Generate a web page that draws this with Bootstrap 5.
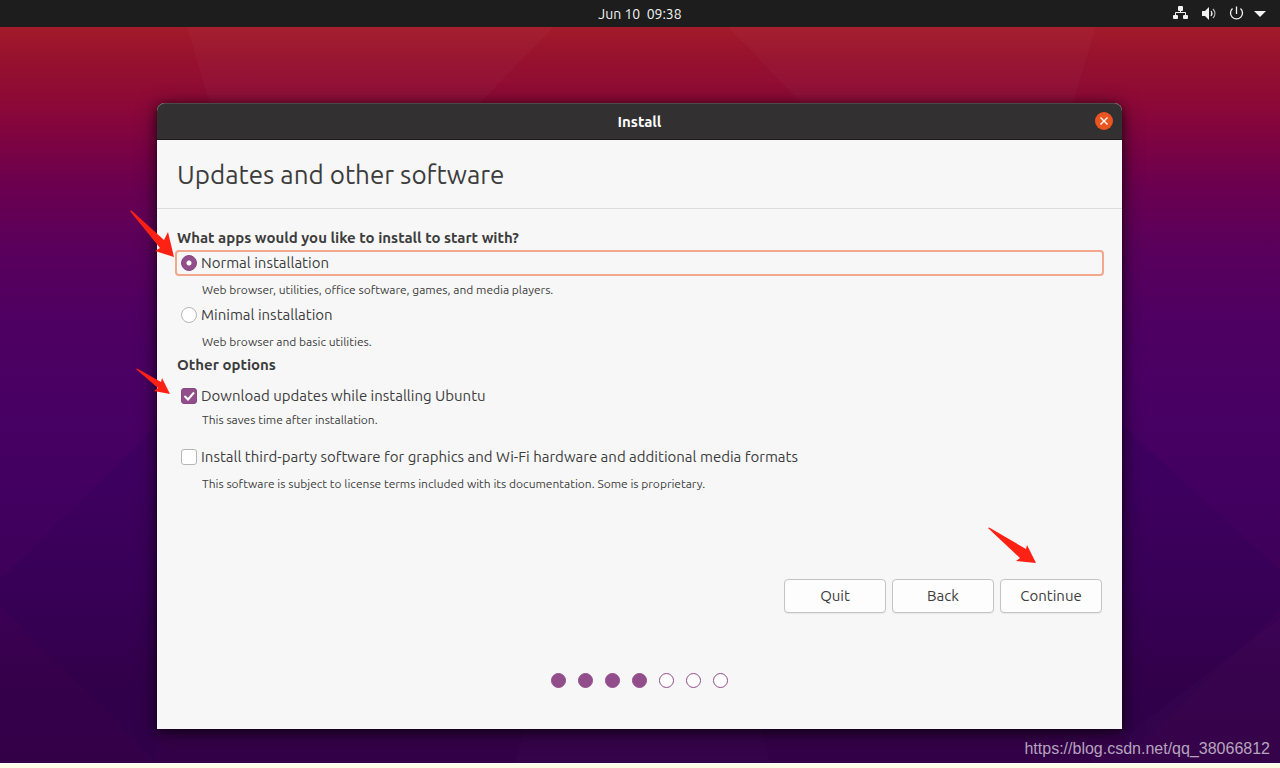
<!DOCTYPE html>
<html lang="en">
<head>
<meta charset="utf-8">
<meta name="viewport" content="width=device-width, initial-scale=1">
<title>Install</title>
<link href="https://cdn.jsdelivr.net/npm/bootstrap@5.3.0/dist/css/bootstrap.min.css" rel="stylesheet">
<style>
  body { font-family: Ubuntu, "Noto Sans", sans-serif; font-size: 15px; line-height: 20px; color: #3d3d3d; background: #ffffe6; }
  .topbar { height: 27px; background: #1d1d1d; color: #f2f2f2; }
  .topbar-side { flex: 1 1 0; }
  .clock { font-size: 14px; white-space: pre; }
  .desktop { padding: 76px 17px 34px 16px; margin-bottom: 4px; border-bottom: 1px solid #fff; overflow: hidden;
    background: linear-gradient(#a31a2a 0, #97122d 4%, #8b0838 11%, #7b0343 16%, #6a0050 22%, #5a005c 30%, #4e0062 40%, #480063 52%, #420060 63%, #3d0058 76%, #36004b 88%, #330047 100%); }
  .wallpaper { inset: 0; }
  .installer { max-width: 965px; margin-right: auto; margin-left: auto; background: #f7f7f7; border-radius: 8px 8px 0 0; box-shadow: 0 2px 8px rgba(0,0,0,.5), 0 3px 20px rgba(0,0,0,.5); }
  .titlebar { height: 37px; background: #323030; border-top: 1px solid #4b4a49; border-bottom: 1px solid #1c1b1b; border-radius: 8px 8px 0 0; color: #fff; }
  .title-close { width: 18px; height: 18px; background: #e95420; right: 9px; top: 8px; }
  .page-head { height: 69px; border-bottom: 1px solid #dcdcdc; padding: 2px 20px 0; }
  .page-title { font-size: 26px; line-height: 32px; }
  .page-body { padding: 19px 18px 41px; }
  .group-title { font-size: 15px; line-height: 20px; padding-left: 2px; margin-bottom: 2px; }
  .group-title.other { margin: 3px 0 8px; }
  .option { height: 26px; border: 2px solid transparent; border-radius: 4px; padding: 0 4px; gap: 4px; }
  .option.focused { border-color: #f3a78d; }
  .option .form-check-input { width: 16px; height: 16px; margin: 0; flex: none; background-color: #fff; border-color: #b8b6b5; }
  .option .form-check-input[type=checkbox] { border-radius: 3px; }
  .option .form-check-input:checked { background-color: #924d8b; border-color: #8a4783; }
  .option .form-check-input[type=radio]:checked { background-image: radial-gradient(circle, #fff 0 2px, transparent 3px); }
  .option .form-check-input[type=checkbox]:checked { background-image: url("data:image/svg+xml,%3Csvg xmlns='http://www.w3.org/2000/svg' viewBox='0 0 14 14'%3E%3Cpath d='M2.500 7l3.500 3.500 6-7' fill='none' stroke='%23fff' stroke-width='2'/%3E%3C/svg%3E"); }
  .hint { font-size: 12px; padding-left: 27px; margin: 4px 0 2px; }
  .hint.tight { margin: 1px 0 14px; }
  .btn-installer { width: 102px; height: 34px; padding: 0; font-size: 15px; color: #3d3d3d; background: #fdfdfd; border: 1px solid #c4c4c4; border-radius: 4px; box-shadow: 0 1px 1px rgba(0,0,0,.06); }
  .actions { gap: 6px; margin-top: 85px; padding-right: 2px; }
  .steps { gap: 12px; margin-top: 60px; }
  .step-dot { width: 15px; height: 15px; border: 1px solid #924d8b; background: #fff; border-radius: 50%; }
  .step-dot.done { background: #924d8b; }
  .pointer { fill: #ff2114; pointer-events: none; }
  .pointer-a { left: -28px; top: 107px; }
  .pointer-b { left: -22px; top: 265px; }
  .pointer-c { right: 86px; top: 424px; }
  .credit { right: 10px; bottom: 4px; font: 16px/20px "Liberation Sans", Arial, sans-serif; color: #b5a4bd; text-decoration: none; }
</style>
</head>
<body class="d-flex flex-column min-vh-100">
<header class="topbar d-flex align-items-center">
  <div class="topbar-side ps-3"></div>
  <time class="clock">Jun 10  09:38</time>
  <div class="topbar-side d-flex justify-content-end pe-3">
    <svg width="92" height="18" viewBox="0 0 92 18" fill="#f2f2f2" overflow="visible" aria-hidden="true">
      <rect x="6" y="1" width="5" height="5" rx="1"/><rect x="1" y="10" width="5" height="4" rx="1"/><rect x="11" y="10" width="5" height="4" rx="1"/>
      <path d="M8.500 5v3M3.500 11V7.500h10V11" fill="none" stroke="#f2f2f2"/>
      <path d="M30 6h3l4-4v13l-4-4h-3z"/>
      <path d="M39 6q2 2.500 0 5" fill="none" stroke="#f2f2f2" stroke-width="1.200"/>
      <path d="M41 4q4 4.500 0 9" fill="none" stroke="#bbb" stroke-width="1.200"/>
      <path d="M60.500 3.500a6 6 0 1 0 8 0M64.500 1.500V9" fill="none" stroke="#f2f2f2" stroke-width="1.300"/>
      <path d="M82 6h12l-6 6z"/>
    </svg>
  </div>
</header>
<main class="desktop position-relative flex-grow-1">
  <svg class="wallpaper position-absolute w-100 h-100" viewBox="0 27 1280 736" preserveAspectRatio="none" aria-hidden="true">
    <g fill="#fff" fill-opacity=".025">
      <path d="M187 27H554L390 195H237z"/><path d="M728 27H1096L1045 195H890z"/>
    </g>
    <g fill="#1c0050" fill-opacity=".12">
      <path d="M0 580L157 425V763L0 605z"/><path d="M1280 570L1122 425V763L1280 610z"/>
    </g>
    <g fill="#fff" fill-opacity=".01"><path d="M515 763l15-60h225l15 60z"/><path d="M1090 763l190-145v145z"/></g>
  </svg>
  <section class="installer position-relative" aria-labelledby="window-title">
    <div class="titlebar d-flex align-items-center justify-content-center position-relative">
      <strong id="window-title">Install</strong>
      <button type="button" class="title-close position-absolute border-0 rounded-circle p-0 d-flex align-items-center justify-content-center" aria-label="Close">
        <svg width="10" height="10" viewBox="0 0 10 10"><path d="M1.500 1.500l7 7M8.500 1.500l-7 7" stroke="#fff" stroke-width="1.400"/></svg>
      </button>
    </div>
    <div class="page-head d-flex align-items-center"><h1 class="page-title fw-normal m-0">Updates and other software</h1></div>
    <form class="page-body">
      <div role="radiogroup" aria-labelledby="apps-title">
        <h2 class="group-title fw-bold" id="apps-title">What apps would you like to install to start with?</h2>
        <div class="option focused d-flex align-items-center">
          <input class="form-check-input" type="radio" name="apps" id="normal" checked><label for="normal">Normal installation</label>
        </div>
        <p class="hint">Web browser, utilities, office software, games, and media players.</p>
        <div class="option d-flex align-items-center">
          <input class="form-check-input" type="radio" name="apps" id="minimal"><label for="minimal">Minimal installation</label>
        </div>
        <p class="hint">Web browser and basic utilities.</p>
      </div>
      <h2 class="group-title other fw-bold">Other options</h2>
      <div class="option d-flex align-items-center">
        <input class="form-check-input" type="checkbox" id="updates" checked><label for="updates">Download updates while installing Ubuntu</label>
      </div>
      <p class="hint tight">This saves time after installation.</p>
      <div class="option d-flex align-items-center">
        <input class="form-check-input" type="checkbox" id="thirdparty"><label for="thirdparty">Install third-party software for graphics and Wi-Fi hardware and additional media formats</label>
      </div>
      <p class="hint">This software is subject to license terms included with its documentation. Some is proprietary.</p>
      <div class="actions d-flex justify-content-end">
        <button type="button" class="btn btn-installer">Quit</button>
        <button type="button" class="btn btn-installer">Back</button>
        <button type="button" class="btn btn-installer">Continue</button>
      </div>
      <div class="steps d-flex justify-content-center" role="img" aria-label="Step 4 of 7">
        <span class="step-dot done"></span><span class="step-dot done"></span><span class="step-dot done"></span><span class="step-dot done"></span><span class="step-dot"></span><span class="step-dot"></span><span class="step-dot"></span>
      </div>
    </form>
    <svg class="pointer pointer-a position-absolute" width="46" height="50" viewBox="0 0 46 50" aria-hidden="true"><path d="M1 1q1-1 2 0L35 30l4-8 6 25-19-6 5-3z"/></svg>
    <svg class="pointer pointer-b position-absolute" width="36" height="28" viewBox="0 0 36 28" aria-hidden="true"><path d="M1 1q1-1 2 0l23 13 1-4 8 16-16-3 4-3z"/></svg>
    <svg class="pointer pointer-c position-absolute" width="49" height="38" viewBox="0 0 49 38" aria-hidden="true"><path d="M1 1q1-1 2 0l36 21 1-4 9 18-20-2 4-3z"/></svg>
  </section>
  <a class="credit position-absolute" href="https://blog.csdn.net/qq_38066812">https://blog.csdn.net/qq_38066812</a>
</main>
<script src="https://cdn.jsdelivr.net/npm/bootstrap@5.3.0/dist/js/bootstrap.bundle.min.js"></script>
</body>
</html>
